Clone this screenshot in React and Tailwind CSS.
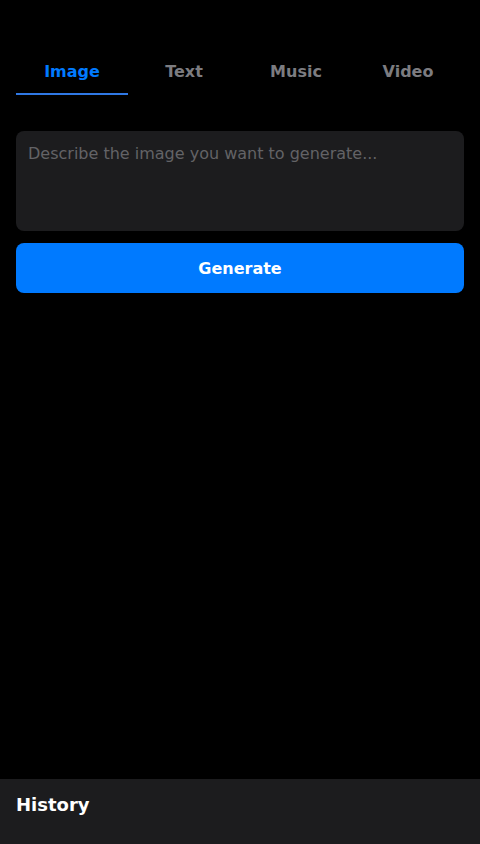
import { useState } from 'react'

const tabs = ['Image', 'Text', 'Music', 'Video']

export default function App() {
  const [active, setActive] = useState('Image')
  const [prompt, setPrompt] = useState('')

  return (
    <div
      className="h-screen flex flex-col bg-black text-white"
      style={{ fontFamily: '"DejaVu Sans", sans-serif' }}
    >
      <main className="flex-1 px-4 pt-[49px]">
        {/* Tabs */}
        <div className="flex">
          {tabs.map((tab) => (
            <button
              key={tab}
              onClick={() => setActive(tab)}
              className={`flex-1 pt-[11px] pb-[9px] text-base leading-6 font-bold border-b-2 ${
                active === tab
                  ? 'text-[#007aff] border-[#2f78e4]'
                  : 'text-[#7c7c80] border-transparent'
              }`}
            >
              {tab}
            </button>
          ))}
        </div>

        {/* Prompt */}
        <textarea
          value={prompt}
          onChange={(e) => setPrompt(e.target.value)}
          placeholder={`Describe the ${active.toLowerCase()} you want to generate...`}
          className="mt-9 block w-full h-[100px] resize-none rounded-lg bg-[#1c1c1e] px-3 pt-[11px] pb-3 text-base leading-6 text-white placeholder:text-[#636366] outline-none"
        />
        <button className="mt-3 w-full h-[50px] pt-px rounded-lg bg-[#007aff] text-base font-bold text-white">
          Generate
        </button>
      </main>

      {/* History */}
      <section className="h-[65px] bg-[#1c1c1e] px-4 pt-3">
        <h2 className="text-lg leading-7 font-bold">History</h2>
      </section>
    </div>
  )
}
